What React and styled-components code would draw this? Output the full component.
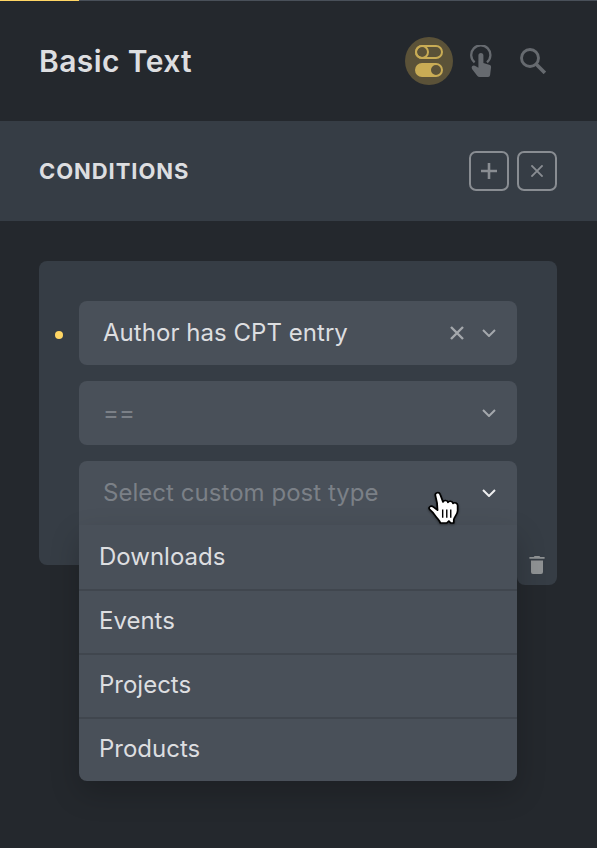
import React from 'react'
import styled, { createGlobalStyle } from 'styled-components'

const options = ['Downloads', 'Events', 'Projects', 'Products']

export default function App() {
  return (
    <>
      <GlobalStyle />
      <Panel>
        <TabLine>
          <ActiveTab />
        </TabLine>
        <Header>
          <Title>Basic Text</Title>
          <HeaderIcons>
            <ActiveIcon>
              <TogglesIcon />
            </ActiveIcon>
            <HeaderIcon>
              <TouchIcon />
            </HeaderIcon>
            <HeaderIcon>
              <SearchIcon />
            </HeaderIcon>
          </HeaderIcons>
        </Header>
        <SectionBar>
          <SectionTitle>Conditions</SectionTitle>
          <SectionActions>
            <SquareButton aria-label="Add">
              <svg width="16" height="16" viewBox="0 0 16 16" fill="none" stroke="currentColor" strokeWidth="2.6">
                <path d="M8 0v16M0 8h16" />
              </svg>
            </SquareButton>
            <SquareButton aria-label="Close">
              <svg width="12" height="12" viewBox="0 0 12 12" fill="none" stroke="currentColor" strokeWidth="1.9">
                <path d="M.4.4l11.2 11.2M11.6.4L.4 11.6" />
              </svg>
            </SquareButton>
          </SectionActions>
        </SectionBar>
        <Content>
          <Card>
            <Dot />
            <Field>
              <Value>Author has CPT entry</Value>
              <Clear width="14" height="14" viewBox="0 0 14 14">
                <path d="M1 1l12 12M13 1L1 13" />
              </Clear>
              <Chevron />
            </Field>
            <Field>
              <Value $muted>==</Value>
              <Chevron />
            </Field>
            <Field $open>
              <Value $muted>Select custom post type</Value>
              <Chevron active />
              <Menu>
                {options.map((name) => (
                  <Option key={name}>{name}</Option>
                ))}
              </Menu>
            </Field>
            <Trash aria-label="Delete">
              <svg width="16" height="18" viewBox="0 0 16 18" fill="currentColor">
                <path d="M5.6 0h4.8l.9 1.1H15.6v1.7H.4V1.1h4.3zM2 4.5h12v11.6q0 1.9-1.9 1.9H3.9Q2 18 2 16.1z" />
              </svg>
            </Trash>
            <Cursor />
          </Card>
        </Content>
      </Panel>
    </>
  )
}

function TogglesIcon() {
  return (
    <svg width="28" height="32" viewBox="0 0 28 32" fill="none" stroke="currentColor" strokeWidth="2">
      <rect x="1" y="1" width="26" height="12" rx="6" />
      <circle cx="7" cy="7" r="6" />
      <path
        fill="currentColor"
        stroke="none"
        fillRule="evenodd"
        d="M7 18h14a7 7 0 0 1 0 14H7a7 7 0 0 1 0-14zm14 2a5 5 0 1 0 0 10a5 5 0 0 0 0-10z"
      />
    </svg>
  )
}

function TouchIcon() {
  return (
    <svg width="24" height="32" viewBox="0 0 24 32">
      <path d="M5.6 17.3A9.6 9.6 0 1 1 18 17.3" fill="none" stroke="currentColor" strokeWidth="2.3" />
      <path
        fill="currentColor"
        d="M9.4 10.6a2.5 2.5 0 0 1 5 0v7.4l6.500 1.900q1.400.4 1.200 2l-1 8.200q-.2 1.900-2 1.900H10.500q-1.300 0-2.100-.9L3 24q-.9-1.700.3-2.900 1.100-1 2.600-.3L9.400 22.700z"
      />
    </svg>
  )
}

function SearchIcon() {
  return (
    <svg width="26" height="26" viewBox="0 0 26 26" fill="none" stroke="currentColor">
      <circle cx="10" cy="10" r="8.5" strokeWidth="2.9" />
      <path d="M16 16l8.9 8.9" strokeWidth="3.6" />
    </svg>
  )
}

function Chevron({ active }) {
  return (
    <Arrow $active={active} width="14" height="8" viewBox="0 0 14 8">
      <path d="M1 1l6 6 6-6" />
    </Arrow>
  )
}

function Cursor() {
  return (
    <Pointer width="34" height="38" viewBox="0 0 34 38">
      <g transform="translate(-1 -0.2) scale(1.17 1.05)" stroke="#000">
        <path
          fill="#fff"
          strokeWidth="1.5"
          strokeLinejoin="round"
          d="M7.2 5.6C6.4 2.6 10.4 1.5 11.3 4.5L13.7 11.6C14.3 9.7 17.6 9.8 17.9 12C18.7 10.3 21.9 10.7 22.2 12.9C23.6 11.6 26.3 12.7 26.2 15V20C26.2 23.5 23.1 26 22.9 28.5V31.6H20.2L18.7 29.7L16.9 31.6H11.4C10.6 28.8 8.7 27.4 7.3 25C5.7 22.3 4.5 20.8 2.4 18.9C.6 16.8 3.2 14.6 5.4 16.2L9 19.4C9 15 8.4 10 7.2 5.6Z"
        />
        <path d="M13.4 18.7v8M16.9 18.7v8M20.3 18.7v8" strokeWidth="1.2" />
      </g>
    </Pointer>
  )
}

const GlobalStyle = createGlobalStyle`
  * {
    box-sizing: border-box;
  }
  body {
    margin: 0;
    background: #23282d;
    font-family: Inter, "Liberation Sans", sans-serif;
    color: #dddee0;
  }
`

const Panel = styled.div`
  width: 100%;
  height: 848px;
  overflow: hidden;
  background: #24282d;
`

const TabLine = styled.div`
  height: 1px;
  background: #495059;
`

const ActiveTab = styled.div`
  width: 79px;
  height: 1px;
  background: #ffd664;
`

const Header = styled.header`
  display: flex;
  align-items: center;
  justify-content: space-between;
  height: 120px;
  padding: 0 40px 0 39px;
`

const Title = styled.h1`
  margin: 0;
  font-size: 30px;
  font-weight: 600;
  letter-spacing: 0.4px;
`

const HeaderIcons = styled.div`
  display: flex;
  align-items: center;
  gap: 4px;
`

const HeaderIcon = styled.div`
  display: flex;
  align-items: center;
  justify-content: center;
  width: 48px;
  height: 48px;
  color: #666a6f;
`

const ActiveIcon = styled(HeaderIcon)`
  border-radius: 50%;
  background: #5b5238;
  color: #c9ac55;
`

const SectionBar = styled.div`
  display: flex;
  align-items: center;
  justify-content: space-between;
  height: 100px;
  padding: 0 40px 0 39px;
  background: #363d45;
`

const SectionTitle = styled.h2`
  margin: 0;
  font-size: 22px;
  font-weight: 700;
  letter-spacing: 0.93px;
  text-transform: uppercase;
`

const SectionActions = styled.div`
  display: flex;
  gap: 8px;
`

const SquareButton = styled.button`
  display: flex;
  align-items: center;
  justify-content: center;
  width: 40px;
  height: 40px;
  padding: 0;
  border: 2px solid #898d92;
  border-radius: 7px;
  background: none;
  color: #898d92;
`

const Content = styled.main`
  padding: 40px 40px 0 39px;
`

const Card = styled.div`
  position: relative;
  display: flex;
  flex-direction: column;
  gap: 16px;
  padding: 40px;
  border-radius: 8px 8px 0 8px;
  background: #363d45;
`

const Dot = styled.span`
  position: absolute;
  left: 16px;
  top: 70px;
  width: 8px;
  height: 8px;
  border-radius: 50%;
  background: #ffd664;
`

const Field = styled.div`
  position: relative;
  display: flex;
  align-items: center;
  height: 64px;
  padding: 0 21px 0 24px;
  border-radius: ${(props) => (props.$open ? '8px 8px 0 0' : '8px')};
  background: #495059;
`

const Value = styled.span`
  flex: 1;
  font-size: 24px;
  line-height: 64px;
  letter-spacing: 0.04px;
  color: ${(props) => (props.$muted ? '#7b8087' : '#dddee0')};
`

const Clear = styled.svg`
  margin-right: 18px;
  fill: none;
  stroke: #a4a8ac;
  stroke-width: 2.4;
`

const Arrow = styled.svg`
  fill: none;
  stroke: ${(props) => (props.$active ? '#eeeeef' : '#a4a8ac')};
  stroke-width: 2;
`

const Menu = styled.ul`
  position: absolute;
  top: 64px;
  left: 0;
  right: 0;
  z-index: 1;
  margin: 0;
  padding: 0;
  list-style: none;
  overflow: hidden;
  border-radius: 0 0 8px 8px;
  background: #495059;
  box-shadow: 0 12px 30px rgba(0, 0, 0, 0.2);
`

const Option = styled.li`
  height: 64px;
  padding: 0 20px;
  font-size: 24px;
  line-height: 64px;
  letter-spacing: 0;

  & + & {
    box-shadow: inset 0 2px #40464e;
  }
`

const Trash = styled.button`
  position: absolute;
  right: 0;
  bottom: -20px;
  display: flex;
  align-items: center;
  justify-content: center;
  width: 40px;
  height: 40px;
  padding: 0;
  border: none;
  border-radius: 0 0 8px 8px;
  background: #363d45;
  color: #8f9294;
`

const Pointer = styled.svg`
  position: absolute;
  left: 389px;
  top: 229px;
  z-index: 2;
  filter: drop-shadow(0 1px 1px rgba(0, 0, 0, 0.4));
`
